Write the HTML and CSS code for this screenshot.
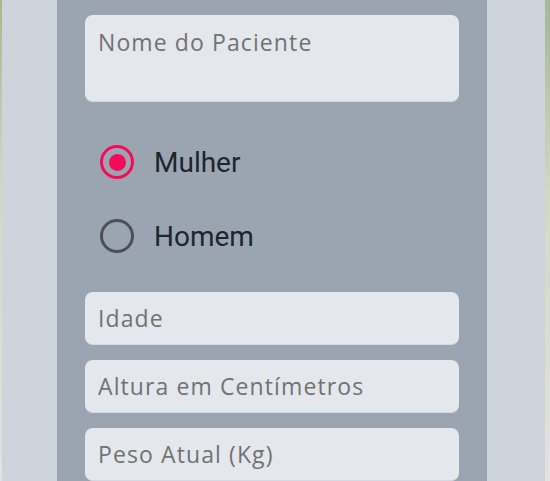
FILE: index.html
```html
<!DOCTYPE html>
<html lang="pt">
<head>
<meta charset="utf-8">
<link rel="stylesheet" href="styles.css">
</head>
<body>
<div class="page">
  <form class="panel">
    <textarea class="field field-tall" placeholder="Nome do Paciente"></textarea>
    <div class="radios">
      <label class="radio-row">
        <span class="radio checked"><span class="dot"></span></span>
        <span class="radio-label">Mulher</span>
      </label>
      <label class="radio-row">
        <span class="radio"></span>
        <span class="radio-label">Homem</span>
      </label>
    </div>
    <input class="field" type="text" placeholder="Idade">
    <input class="field" type="text" placeholder="Altura em Centímetros">
    <input class="field" type="text" placeholder="Peso Atual (Kg)">
  </form>
</div>
</body>
</html>
```
FILE: styles.css
```css
html, body {
  margin: 0;
  height: 100%;
}
body {
  background: linear-gradient(to bottom, #a6b892 0%, #d2d8c4 40%, #e2e2e2 100%);
  overflow: hidden;
}
.page {
  margin: 0 5px 0 2px;
  height: 100%;
  background: #cdd4dc;
  padding-left: 55px;
  box-sizing: border-box;
}
.panel {
  width: 430px;
  height: 100%;
  background: #9ba5b1;
  box-sizing: border-box;
  padding: 15px 28px 0;
  display: flex;
  flex-direction: column;
  margin: 0;
}
.field {
  display: block;
  flex-shrink: 0;
  width: 374px;
  height: 53px;
  box-sizing: border-box;
  border: none;
  border-bottom: 1px solid #d3d9e0;
  border-radius: 8px;
  background: #e4e7ec;
  font-family: "Open Sans", sans-serif;
  font-size: 23px;
  letter-spacing: 1.1px;
  color: #333;
  padding: 0 13px;
  margin: 0 0 15px;
  outline: none;
}
.field::placeholder {
  color: #727272;
  opacity: 1;
}
.field-tall {
  height: 87px;
  padding-top: 12px;
  resize: none;
  margin-bottom: 23px;
  line-height: 31px;
}
.radios {
  display: flex;
  flex-direction: column;
  flex-shrink: 0;
  margin-bottom: 19px;
}
.radio-row {
  display: flex;
  align-items: center;
  height: 74px;
  padding-left: 15px;
  gap: 20px;
}
.radio {
  width: 34px;
  height: 34px;
  flex-shrink: 0;
  box-sizing: border-box;
  border: 3px solid #4b5056;
  border-radius: 50%;
  display: flex;
  align-items: center;
  justify-content: center;
}
.radio.checked {
  border-color: #f50a57;
}
.dot {
  width: 17px;
  height: 17px;
  border-radius: 50%;
  background: #f50a57;
}
.radio-label {
  font-family: Roboto, sans-serif;
  font-size: 28px;
  color: #1c262e;
}
```
